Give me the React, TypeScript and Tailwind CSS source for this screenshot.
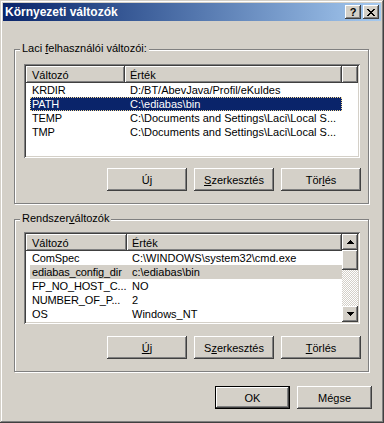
import React from 'react'

const raised = 'shadow-[inset_-1px_-1px_#404040,inset_1px_1px_#ffffff,inset_-2px_-2px_#808080,inset_2px_2px_#d4d0c8]'
const sunken = 'shadow-[inset_1px_1px_#808080,inset_-1px_-1px_#ffffff,inset_2px_2px_#404040,inset_-2px_-2px_#d4d0c8]'
const headerCell = 'shadow-[inset_-1px_-1px_#404040,inset_1px_1px_#ffffff,inset_-2px_-2px_#808080]'

const userVars = [
  ['KRDIR', 'D:/BT/AbevJava/Profil/eKuldes'],
  ['PATH', 'C:\\ediabas\\bin'],
  ['TEMP', 'C:\\Documents and Settings\\Laci\\Local S...'],
  ['TMP', 'C:\\Documents and Settings\\Laci\\Local S...'],
]

const sysVars = [
  ['ComSpec', 'C:\\WINDOWS\\system32\\cmd.exe'],
  ['ediabas_config_dir', 'c:\\ediabas\\bin'],
  ['FP_NO_HOST_C...', 'NO'],
  ['NUMBER_OF_P...', '2'],
  ['OS', 'Windows_NT'],
]

const Arrow = ({ down }: { down?: boolean }) => (
  <svg width="7" height="4" viewBox="0 0 7 4" shapeRendering="crispEdges" className={down ? 'rotate-180' : ''}>
    <path d="M3 0h1v1H3z M2 1h3v1H2z M1 2h5v1H1z M0 3h7v1H0z" fill="#000" />
  </svg>
)

const Btn = ({ children, def, w = 'w-[80px]' }: { children: React.ReactNode; def?: boolean; w?: string }) => (
  <div className={`${w} h-[23px] flex items-center justify-center bg-[#d4d0c8] ${def ? 'shadow-[inset_0_0_0_1px_#000,inset_-2px_-2px_#404040,inset_2px_2px_#ffffff,inset_-3px_-3px_#808080,inset_3px_3px_#d4d0c8]' : raised}`}>
    {children}
  </div>
)

const U = ({ children }: { children: React.ReactNode }) => <span className="underline underline-offset-[1px]">{children}</span>

function ListView({ rows, col1, col2, sel, active, scroll, h }: { rows: string[][]; col1: number; col2: number; sel: number; active?: boolean; scroll?: boolean; h: string }) {
  return (
    <div className={`w-[336px] ${h} bg-white p-[2px] flex ${sunken}`}>
      <div className="flex-1 flex flex-col overflow-hidden">
        <div className="h-[17px] flex shrink-0 bg-[#d4d0c8]">
          <div className={`flex items-center pl-[6px] ${headerCell}`} style={{ width: col1 }}>Változó</div>
          <div className={`flex items-center pl-[5px] ${headerCell}`} style={{ width: col2 }}>Érték</div>
          <div className={`flex-1 ${headerCell}`} />
        </div>
        {rows.map(([name, val], i) => {
          const isSel = i === sel
          const selCls = isSel ? (active ? 'bg-[#0a246a] text-white outline outline-1 outline-dotted outline-[#f5db95] -outline-offset-1' : 'bg-[#d4d0c8]') : ''
          return (
            <div key={name} className="h-[14px] shrink-0 flex pl-[4px]">
              <div className={`flex items-center ${selCls}`} style={{ width: col1 + col2 - 4 }}>
                <div className="pl-[2px] whitespace-nowrap tracking-[-0.15px] shrink-0" style={{ width: col1 - 4 }}>{name}</div>
                <div className="pl-[5px] whitespace-nowrap flex-1">{val}</div>
              </div>
            </div>
          )
        })}
      </div>
      {scroll && (
        <div className="w-[16px] flex flex-col">
          <div className={`h-[16px] flex items-center justify-center bg-[#d4d0c8] ${raised}`}><Arrow /></div>
          <div className={`h-[20px] bg-[#d4d0c8] ${raised}`} />
          <div className="flex-1 bg-[repeating-conic-gradient(#d4d0c8_0%_25%,#ffffff_0%_50%)] bg-[length:2px_2px]" />
          <div className={`h-[16px] flex items-center justify-center bg-[#d4d0c8] ${raised}`}><Arrow down /></div>
        </div>
      )}
    </div>
  )
}

function GroupBox({ label, children, cls }: { label: React.ReactNode; children: React.ReactNode; cls: string }) {
  return (
    <div className={`relative w-[355px] border border-[#808080] shadow-[inset_1px_1px_#ffffff,1px_1px_#ffffff] flex flex-col ${cls}`}>
      <div className="absolute left-[5px] top-[-8px] px-[2px] bg-[#d4d0c8] leading-[13px]">{label}</div>
      {children}
    </div>
  )
}

export default function App() {
  return (
    <div className="w-[384px] h-[423px] bg-[#d4d0c8] p-[3px] flex flex-col text-[11px] leading-[14px] text-black font-['Liberation_Sans',Arial,sans-serif] shadow-[inset_-1px_-1px_#404040,inset_1px_1px_#d4d0c8,inset_-2px_-2px_#808080,inset_2px_2px_#ffffff]">
      {/* title bar */}
      <div className="h-[18px] shrink-0 flex items-center justify-between pl-[2px] pr-[2px] bg-linear-to-r from-[#0a246a] to-[#a6caf0]">
        <span className="text-white font-bold text-[12px]">Környezeti változók</span>
        <div className="flex gap-[2px]">
          <div className={`w-[16px] h-[14px] flex items-center justify-center bg-[#d4d0c8] font-bold text-[11px] leading-none ${raised}`}>?</div>
          <div className={`w-[16px] h-[14px] flex items-center justify-center bg-[#d4d0c8] ${raised}`}>
            <svg width="8" height="7" viewBox="0 0 8 7" shapeRendering="crispEdges">
              <path d="M0 0h2v1H0z M6 0h2v1H6z M1 1h2v1H1z M5 1h2v1H5z M2 2h4v1H2z M3 3h2v1H3z M2 4h4v1H2z M1 5h2v1H1z M5 5h2v1H5z M0 6h2v1H0z M6 6h2v1H6z" fill="#000" />
            </svg>
          </div>
        </div>
      </div>

      <div className="flex flex-col pl-[11px]">
        <GroupBox cls="mt-[28px] h-[155px]" label={<>Laci <U>f</U>elhasználói változói:</>}>
          <div className="mt-[14px] ml-[9px]">
            <ListView rows={userVars} col1={99} col2={217} sel={1} active h="h-[94px]" />
          </div>
          <div className="mt-[10px] pr-[7px] flex justify-end gap-[7px]">
            <Btn>Ú<U>j</U></Btn>
            <Btn><U>S</U>zerkesztés</Btn>
            <Btn>Tör<U>l</U>és</Btn>
          </div>
        </GroupBox>

        <GroupBox cls="mt-[15px] h-[153px]" label={<>Rendszer<U>v</U>áltozók</>}>
          <div className="mt-[12px] ml-[9px]">
            <ListView rows={sysVars} col1={101} col2={215} sel={1} scroll h="h-[92px]" />
          </div>
          <div className="mt-[12px] pr-[7px] flex justify-end gap-[7px]">
            <Btn><U>Ú</U>j</Btn>
            <Btn>S<U>z</U>erkesztés</Btn>
            <Btn><U>T</U>örlés</Btn>
          </div>
        </GroupBox>
      </div>

      <div className="mt-[14px] pr-[9px] flex justify-end gap-[7px]">
        <Btn def w="w-[75px]">OK</Btn>
        <Btn w="w-[75px]">Mégse</Btn>
      </div>
    </div>
  )
}
